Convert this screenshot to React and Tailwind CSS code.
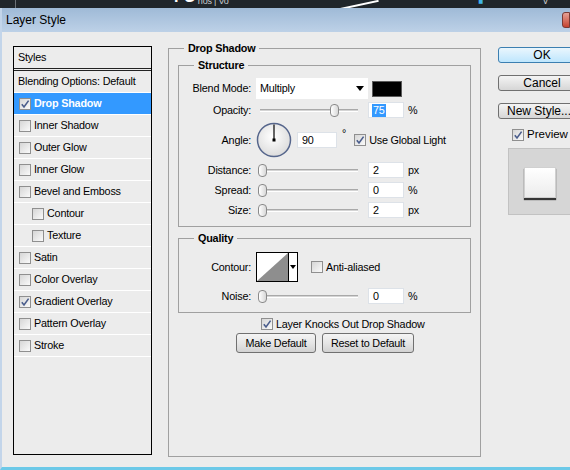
import React from "react";

const font = { fontFamily: "'Liberation Sans', Arial, sans-serif" };

const styles = [
  { label: "Drop Shadow", on: true, selected: true },
  { label: "Inner Shadow" },
  { label: "Outer Glow" },
  { label: "Inner Glow" },
  { label: "Bevel and Emboss" },
  { label: "Contour", indent: true },
  { label: "Texture", indent: true },
  { label: "Satin" },
  { label: "Color Overlay" },
  { label: "Gradient Overlay", on: true },
  { label: "Pattern Overlay" },
  { label: "Stroke" },
];

function Check({ on }) {
  return (
    <span className="w-[12px] h-[12px] shrink-0 border border-[#8f8f8f] bg-linear-to-br from-[#d6d6d6] to-[#fafafa] flex items-center justify-center">
      {on && (
        <svg width="10" height="10" viewBox="0 0 10 10">
          <path d="M1.8 5.2 L4 8 L8.6 1.6" fill="none" stroke="#4a5d8c" strokeWidth="1.6" />
        </svg>
      )}
    </span>
  );
}

function Slider({ pos }) {
  return (
    <div className="relative ml-[9px] w-[98px] h-[16px] flex items-center">
      <div className="w-full h-[3px] border-t border-[#a9a9a9] border-b border-b-white bg-[#d4d4d4]"></div>
      <div
        className="absolute top-[2px] w-[9px] h-[13px] rounded-[4px] border border-[#8a8a8a] bg-linear-to-r from-white to-[#d8d8d8]"
        style={{ left: pos }}
      ></div>
    </div>
  );
}

function NumBox({ value, selected, w = "w-[36px]", ml = "ml-[10px]" }) {
  return (
    <div className={`${ml} ${w} h-[16px] bg-white border border-[#dde2e8] flex items-center pl-[3px] text-black`}>
      {selected ? <span className="bg-[#3399ff] text-white px-[1px] leading-[13px]">{value}</span> : <span className="pl-[1px]">{value}</span>}
    </div>
  );
}

function Label({ children }) {
  return <div className="w-[72px] text-right shrink-0">{children}</div>;
}

function SliderRow({ label, value, unit, pos, selected, className }) {
  return (
    <div className={`flex items-center h-[16px] ${className}`}>
      <Label>{label}</Label>
      <Slider pos={pos} />
      <NumBox value={value} selected={selected} />
      <span className="ml-[4px]">{unit}</span>
    </div>
  );
}

function Btn({ children, className }) {
  return (
    <button className={`h-[20px] rounded-[3px] border border-[#707070] bg-linear-to-b from-[#f4f4f4] via-[#e6e6e6] to-[#d2d2d2] text-black flex items-center justify-center ${className}`}>
      {children}
    </button>
  );
}

export default function App() {
  return (
    <div className="w-[570px] h-[470px] overflow-hidden bg-[#20262b] text-[10.8px] tracking-[-0.2px] text-black" style={font}>
      {/* Background behind the dialog */}
      <div className="h-[8px] relative overflow-hidden flex">
        <div className="w-[16px] h-full border-r border-[#6b7177]"></div>
        <span className="ml-[158px] -mt-[11px] text-white font-bold text-[16px] leading-none">FO</span>
        <span className="ml-[2px] -mt-[3px] text-[#c8ccd0] text-[9px] leading-none">nos | Vo</span>
        <div className="ml-[110px] mt-[4px] w-[40px] h-[2px] bg-white -rotate-12"></div>
        <span className="ml-[100px] -mt-[2px] text-[#3fb5e8] text-[8px] leading-none">■</span>
        <span className="ml-[60px] -mt-[3px] text-[#d0d0d0] text-[9px] leading-none">v</span>
      </div>

      {/* Dialog window */}
      <div className="h-[462px] bg-[#ececec] border-l-2 border-[#c3d5ea] border-b-[3px] border-b-[#6cc9e8] flex flex-col">
        <div className="h-[24px] shrink-0 bg-linear-to-b from-[#9fbad7] to-[#bdd1e7] flex items-center justify-between">
          <span className="ml-[4px] text-[12px] tracking-normal">Layer Style</span>
          <div className="w-[8px] h-[16px] rounded-l-[3px] border border-[#7a3a34] bg-linear-to-b from-[#e5a095] to-[#c4412f]"></div>
        </div>

        <div className="flex-1 flex pl-[11px] pt-[14px] overflow-hidden">
          {/* Styles list */}
          <div className="w-[139px] h-[409px] shrink-0 border border-black">
            <div className="h-[21px] pl-[4px] flex items-center">Styles</div>
            <div className="h-[3px] border-y border-[#222]"></div>
            <div className="h-[22px] pl-[4px] flex items-center border-b border-white">Blending Options: Default</div>
            {styles.map((s) => (
              <div
                key={s.label}
                className={`h-[22px] flex items-center gap-[3px] border-b border-white ${s.indent ? "pl-[18px]" : "pl-[5px]"} ${s.selected ? "bg-[#3399ff] text-white font-bold" : ""}`}
              >
                <Check on={s.on} />
                <span>{s.label}</span>
              </div>
            ))}
          </div>

          {/* Drop Shadow settings */}
          <fieldset className="ml-[16px] -mt-[4px] w-[313px] h-[415px] shrink-0 border border-[#a0a0a0] px-[9px] pt-[4px]">
            <legend className="ml-[6px] px-[4px] font-bold leading-[13px]">Drop Shadow</legend>

            <fieldset className="border border-[#a0a0a0] pb-[8px]">
              <legend className="ml-[15px] px-[4px] font-bold leading-[13px]">Structure</legend>

              <div className="flex items-center mt-[6px] h-[21px]">
                <Label>Blend Mode:</Label>
                <div className="ml-[5px] w-[112px] h-[21px] bg-white flex items-center justify-between pl-[4px] pr-[4px]">
                  <span>Multiply</span>
                  <svg width="8" height="5" viewBox="0 0 8 5"><path d="M0 0 H8 L4 5 Z" fill="#000" /></svg>
                </div>
                <div className="ml-[4px] w-[30px] h-[16px] bg-black border border-[#5a5a5a]"></div>
              </div>

              <SliderRow label="Opacity:" value="75" unit="%" pos={70} selected className="mt-[3px]" />

              <div className="flex items-center mt-[4px] h-[36px]">
                <Label>Angle:</Label>
                <svg className="ml-[5px]" width="36" height="36" viewBox="0 0 36 36">
                  <defs>
                    <radialGradient id="dial" cx="45%" cy="40%" r="60%">
                      <stop offset="0%" stopColor="#ffffff" />
                      <stop offset="100%" stopColor="#dcdcdc" />
                    </radialGradient>
                  </defs>
                  <circle cx="18" cy="18" r="16.5" fill="url(#dial)" stroke="#56668c" strokeWidth="1.5" />
                  <line x1="18" y1="18" x2="18" y2="2.5" stroke="#000" strokeWidth="1.2" />
                  <rect x="16.5" y="16.5" width="3" height="3" fill="#000" />
                </svg>
                <NumBox value="90" w="w-[40px]" ml="ml-[5px]" />
                <span className="ml-[5px] self-start mt-[6px] leading-none">°</span>
                <span className="ml-[8px]"><Check on /></span>
                <span className="ml-[3px]">Use Global Light</span>
              </div>

              <SliderRow label="Distance:" value="2" unit="px" pos={-2} className="mt-[4px]" />
              <SliderRow label="Spread:" value="0" unit="%" pos={-2} className="mt-[4px]" />
              <SliderRow label="Size:" value="2" unit="px" pos={-2} className="mt-[4px]" />
            </fieldset>

            <fieldset className="mt-[5px] border border-[#a0a0a0] pb-[8px]">
              <legend className="ml-[15px] px-[4px] font-bold leading-[13px]">Quality</legend>

              <div className="flex items-center mt-[7px] h-[30px]">
                <Label>Contour:</Label>
                <div className="ml-[5px] w-[42px] h-[30px] border border-black flex bg-white">
                  <svg width="31" height="28" viewBox="0 0 31 28">
                    <polygon points="0,28 31,0 31,28" fill="#8e8e8e" />
                  </svg>
                  <div className="flex-1 border-l border-black flex items-center justify-center">
                    <svg width="6" height="4" viewBox="0 0 6 4"><path d="M0 0 H6 L3 4 Z" fill="#000" /></svg>
                  </div>
                </div>
                <span className="ml-[13px]"><Check /></span>
                <span className="ml-[3px]">Anti-aliased</span>
              </div>

              <SliderRow label="Noise:" value="0" unit="%" pos={-2} className="mt-[6px]" />
            </fieldset>

            <div className="flex items-center mt-[4px] h-[14px] pl-[83px]">
              <Check on />
              <span className="ml-[3px]">Layer Knocks Out Drop Shadow</span>
            </div>

            <div className="flex mt-[2px] pl-[58px] gap-[6px]">
              <Btn className="w-[80px]">Make Default</Btn>
              <Btn className="w-[92px]">Reset to Default</Btn>
            </div>
          </fieldset>

          {/* Buttons and preview */}
          <div className="ml-[17px] w-[90px] shrink-0 flex flex-col tracking-normal">
            <button className="mt-[1px] h-[16px] w-[88px] rounded-[3px] border border-[#3c7fb1] bg-linear-to-b from-[#eaf6fd] to-[#bee6fd] text-[12px] flex items-center justify-center">OK</button>
            <button className="mt-[12px] h-[16px] w-[88px] rounded-[3px] border border-[#707070] bg-linear-to-b from-[#f4f4f4] to-[#d6d6d6] text-[12px] flex items-center justify-center">Cancel</button>
            <button className="mt-[12px] h-[16px] w-[88px] rounded-[3px] border border-[#707070] bg-linear-to-b from-[#f4f4f4] to-[#d6d6d6] text-[12px] flex items-center pl-[8px]">New Style...</button>
            <div className="mt-[9px] h-[14px] flex items-center pl-[14px]">
              <Check on />
              <span className="ml-[3px] text-[11.5px]">Preview</span>
            </div>
            <div className="mt-[6px] ml-[10px] h-[67px] bg-[#d6d6d6] border border-[#c2c2c2] pt-[18px] pl-[15px]">
              <div className="w-[32px] h-[31px] bg-linear-to-b from-white to-[#ececec] border border-[#d0d0d0] shadow-[0_2px_1px_rgba(0,0,0,0.75)]"></div>
            </div>
          </div>
        </div>
      </div>
    </div>
  );
}
